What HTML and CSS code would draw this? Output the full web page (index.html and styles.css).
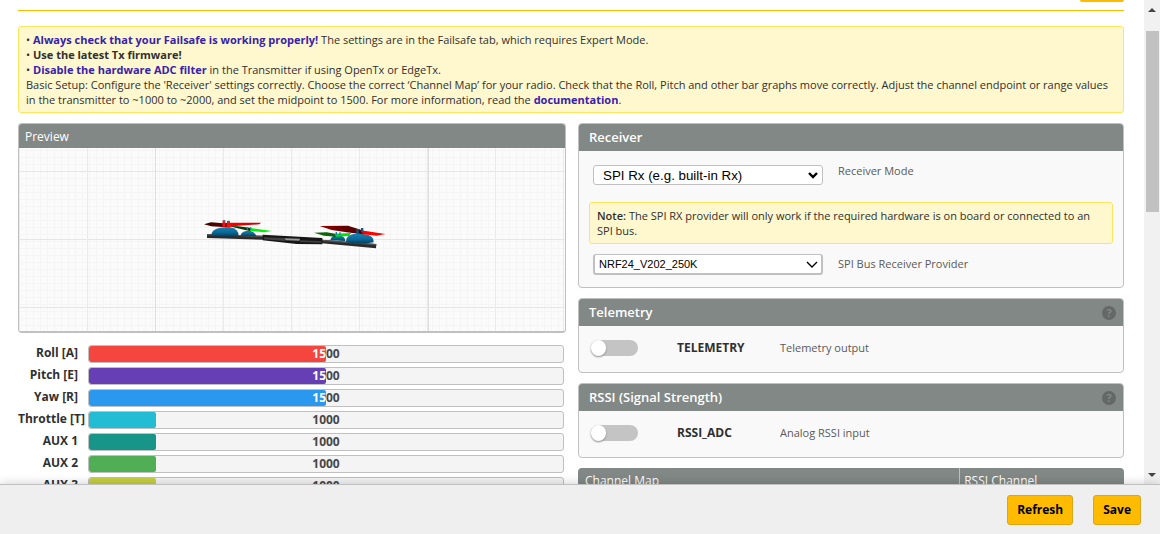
FILE: index.html
```html
<!DOCTYPE html>
<html lang="en">
<head>
<meta charset="utf-8">
<title>Receiver</title>
<link rel="stylesheet" href="styles.css">
</head>
<body>
<div class="app">
  <div class="viewport">
    <main class="content">
      <header class="tab-head"><a class="wiki" href="#" aria-label="Wiki"></a></header>
      <section class="note intro">
        <p>• <a href="#">Always check that your Failsafe is working properly!</a> The settings are in the Failsafe tab, which requires Expert Mode.</p>
        <p>• <strong>Use the latest Tx firmware!</strong></p>
        <p>• <a href="#">Disable the hardware ADC filter</a> in the Transmitter if using OpenTx or EdgeTx.</p>
        <p>Basic Setup: Configure the 'Receiver' settings correctly. Choose the correct ‘Channel Map’ for your radio. Check that the Roll, Pitch and other bar graphs move correctly. Adjust the channel endpoint or range values in the transmitter to ~1000 to ~2000, and set the midpoint to 1500. For more information, read the <a href="#">documentation</a>.</p>
      </section>
      <div class="columns">
        <div class="left">
          <section class="box preview">
            <h2 class="preview-title">Preview</h2>
            <div class="stage">
              <svg class="quad" viewBox="-9 21 630 165" width="210" height="55" role="img" aria-label="Quadcopter model">
                <defs>
                  <linearGradient id="motor" x1="0" y1="0" x2="0" y2="1"><stop offset="0" stop-color="#1482b4"/><stop offset=".6" stop-color="#0a6694"/><stop offset="1" stop-color="#063a56"/></linearGradient>
                  <linearGradient id="redL"><stop offset="0" stop-color="#300"/><stop offset=".36" stop-color="#600"/><stop offset=".44" stop-color="#f00"/><stop offset="1" stop-color="#c00"/></linearGradient>
                  <linearGradient id="redR"><stop offset="0" stop-color="#900"/><stop offset=".35" stop-color="#600"/><stop offset=".62" stop-color="#500"/><stop offset=".67" stop-color="#f00"/><stop offset="1" stop-color="#f00"/></linearGradient>
                </defs>
                <path d="M51 87L220 92L219 104L51 99Z" fill="#2b2b2b"/>
                <path d="M51 87L220 92L220 96L51 91Z" fill="#555"/>
                <path d="M395 104L559 117L558 130L395 115Z" fill="#2b2b2b"/>
                <path d="M395 104L559 117L559 121L395 108Z" fill="#555"/>
                <path d="M218 89L397 99L397 118L320 117L218 106Z" fill="#161616"/>
                <path d="M222 97L290 100L284 108L222 103ZM330 106L395 109L395 113L330 111Z" fill="#414141"/>
                <path d="M285 100L330 101L328 107L287 106Z" fill="#999"/>
                <path d="M152 92Q153 78 174 77Q196 79 198 93Z" fill="url(#motor)"/>
                <path d="M114 63L145 64L184 69L182 79Z" fill="#063806"/>
                <path d="M180 69L246 78L222 82L180 77Z" fill="#06ef06"/>
                <path d="M65 91Q62 74 90 68L118 66Q148 72 145 92Q105 98 65 91Z" fill="url(#motor)"/>
                <path d="M42 58L63 52L100 55L120 53L213 53L208 58L145 62L108 67L64 64Z" fill="url(#redL)"/>
                <path d="M98 46L106 46L106 65L97 65ZM111 48L120 48L120 65L111 65Z" fill="#e91515"/>
                <path d="M99 46h6v5h-6ZM113 47h6v5h-6ZM170 67h4v8h-4ZM180 67h4v8h-4Z" fill="#1482b4"/>
                <path d="M421 106Q423 91 443 89Q465 91 466 108Z" fill="url(#motor)"/>
                <path d="M372 83L410 82L440 87L438 95L402 92Z" fill="#0a640a"/>
                <path d="M434 86L484 84L476 93L438 95Z" fill="#06df06"/>
                <path d="M437 81h4v9h-4ZM448 82h4v8h-4Z" fill="#1482b4"/>
                <path d="M468 112Q466 92 490 87L522 87Q553 91 551 112Q512 119 468 112Z" fill="url(#motor)"/>
                <path d="M389 63L474 62L522 77L586 87L560 92L505 86L470 82L425 75Z" fill="url(#redR)"/>
                <path d="M499 73h7v14h-7ZM513 69h7v12h-7Z" fill="#0b5c84"/>
              </svg>
            </div>
          </section>
          <ul class="bars">
            <li><span class="name">Roll [A]</span><div class="meter"><span class="value">1500</span><div class="fill red" style="width:50%"><span class="value" style="width:200%">1500</span></div></div></li>
            <li><span class="name">Pitch [E]</span><div class="meter"><span class="value">1500</span><div class="fill purple" style="width:50%"><span class="value" style="width:200%">1500</span></div></div></li>
            <li><span class="name">Yaw [R]</span><div class="meter"><span class="value">1500</span><div class="fill blue" style="width:50%"><span class="value" style="width:200%">1500</span></div></div></li>
            <li><span class="name">Throttle [T]</span><div class="meter"><span class="value">1000</span><div class="fill cyan" style="width:14.2%"></div></div></li>
            <li><span class="name">AUX 1</span><div class="meter"><span class="value">1000</span><div class="fill teal" style="width:14.2%"></div></div></li>
            <li><span class="name">AUX 2</span><div class="meter"><span class="value">1000</span><div class="fill green" style="width:14.2%"></div></div></li>
            <li><span class="name">AUX 3</span><div class="meter"><span class="value">1000</span><div class="fill lime" style="width:14.2%"></div></div></li>
          </ul>
        </div>
        <div class="right">
          <section class="box">
            <h2 class="box-title">Receiver</h2>
            <div class="receiver">
              <div class="field">
                <div class="pick bold-arrow"><select id="mode" class="select large"><option>SPI Rx (e.g. built-in Rx)</option></select><svg viewBox="0 0 10 7" width="10" height="7"><path d="M1 1L5 5L9 1" /></svg></div>
                <label for="mode">Receiver Mode</label>
              </div>
              <p class="note"><strong>Note:</strong> The SPI RX provider will only work if the required hardware is on board or connected to an SPI bus.</p>
              <div class="field low">
                <div class="pick thin-arrow"><select id="provider" class="select small"><option>NRF24_V202_250K</option></select><svg viewBox="0 0 12 8" width="12" height="8"><path d="M1 1L6 6L11 1" /></svg></div>
                <label for="provider">SPI Bus Receiver Provider</label>
              </div>
            </div>
          </section>
          <section class="box">
            <h2 class="box-title">Telemetry <button class="help" aria-label="Telemetry help">?</button></h2>
            <div class="feature">
              <input type="checkbox" class="switch" id="telemetry"><label class="feature-name" for="telemetry">TELEMETRY</label><span>Telemetry output</span>
            </div>
          </section>
          <section class="box">
            <h2 class="box-title">RSSI (Signal Strength) <button class="help" aria-label="RSSI help">?</button></h2>
            <div class="feature">
              <input type="checkbox" class="switch" id="rssi"><label class="feature-name" for="rssi">RSSI_ADC</label><span>Analog RSSI input</span>
            </div>
          </section>
          <table class="map">
            <thead><tr><th class="map-main">Channel Map</th><th>RSSI Channel</th></tr></thead>
          </table>
        </div>
      </div>
    </main>
    <div class="scrollbar" aria-hidden="true">
      <svg viewBox="0 0 8 4" width="8" height="4"><path d="M0 4L4 0L8 4Z"/></svg>
      <div class="track"><div class="thumb"></div></div>
      <svg viewBox="0 0 8 4" width="8" height="4"><path d="M0 0L4 4L8 0Z"/></svg>
    </div>
  </div>
  <footer class="toolbar">
    <button class="btn">Refresh</button>
    <button class="btn">Save</button>
  </footer>
</div>
</body>
</html>
```

FILE: styles.css
```css
* { box-sizing: border-box; }
body { margin: 0; background: #fff; color: #303030; font: 11px/15px "Open Sans", sans-serif; }
p, h2, ul { margin: 0; padding: 0; }
strong { font-weight: 600; }
.app { display: flex; flex-direction: column; height: 100vh; overflow: hidden; }
.viewport { display: flex; flex: 1; min-height: 0; }
.content { flex: 1; min-width: 0; padding: 0 20px 0 18px; overflow: hidden; }

.tab-head { display: flex; justify-content: flex-end; height: 11px; border-bottom: 1px solid #ffbb00; }
.wiki { width: 44px; height: 2px; background: #ffbb00; border-radius: 0 0 3px 3px; }

.note { padding: 5px 7px; background: #fff7cd; border: 1px solid #ffe55f; border-radius: 3px; }
.note a { color: #3622ae; font-weight: 700; text-decoration: none; }
.intro { margin: 15px 0 10px; }
.intro strong { font-weight: 700; }

.columns { display: grid; grid-template-columns: calc(50% - 5px) 1fr; gap: 12px; }
.right { display: flex; flex-direction: column; gap: 10px; }
.box { background: #f9f9f9; border: 1px solid #c0c0c0; border-radius: 4px; overflow: hidden; }
.box-title, .preview-title { color: #fff; background: #828885; font-weight: 600; }
.box-title { display: flex; justify-content: space-between; align-items: center; height: 27px; padding: 0 7px 0 10px; font-size: 13px; }
.preview-title { padding: 5px 6px 3px; font-size: 12px; font-weight: 400; line-height: 16px; }

.preview { border-bottom-width: 2px; }
.stage {
  display: flex; align-items: center; justify-content: center; height: 183px;
  background-color: #fbfbfb;
  background-image:
    linear-gradient(90deg, #dedede 1px, transparent 1px),
    linear-gradient(90deg, #eaeaea 1px, transparent 1px),
    linear-gradient(#e6e6e6 1px, transparent 1px),
    linear-gradient(90deg, #f5f5f5 1px, transparent 1px),
    linear-gradient(#f5f5f5 1px, transparent 1px);
  background-size: 273px 100%, 68px 100%, 100% 68px, 7px 100%, 100% 7px;
  background-position: 136px 0, 0 0, 0 23px, 0 0, 0 2px;
}

.bars { display: flex; flex-direction: column; gap: 4px; margin-top: 12px; list-style: none; }
.bars li { display: flex; gap: 10px; padding-right: 2px; font-size: 12px; font-weight: 700; }
.name { width: 60px; text-align: right; white-space: nowrap; }
.meter { display: grid; flex: 1; height: 18px; background: #f4f4f4; border: 1px solid #c0c0c0; border-radius: 3px; line-height: 16px; overflow: hidden; }
.meter > * { grid-area: 1 / 1; }
.value { display: block; text-align: center; color: #474747; }
.fill { height: 16px; border-radius: 2px; overflow: hidden; }
.fill .value { color: #fff; }
.red { background: #f4453f; }
.purple { background: #673fb4; }
.blue { background: #2b98f0; }
.cyan { background: #22bcd4; }
.teal { background: #169588; }
.green { background: #50ae55; }
.lime { background: #c5d040; }

.receiver { display: flex; flex-direction: column; padding: 14px 10px 12px; }
.receiver .note { margin: 17px 0 10px; }
.field { display: flex; gap: 15px; padding-left: 4px; color: #5a5a5a; }
.field label { line-height: 12px; }
.field.low label { line-height: 15px; padding-bottom: 2px; }
.field.low { align-items: center; }
.pick { display: grid; align-items: center; width: 230px; }
.pick > * { grid-area: 1 / 1; }
.pick svg { justify-self: end; margin-right: 5px; fill: none; stroke: #000; pointer-events: none; }
.bold-arrow svg { stroke-width: 2.4; }
.thin-arrow svg { stroke-width: 1.4; }
.select { width: 100%; appearance: none; color: #000; background: #fff; border: 1px solid #c0c0c0; border-radius: 3px; font-family: "Liberation Sans", Arial, sans-serif; }
.large { height: 20px; padding: 0 9px; }
.small { height: 21px; padding: 0 4px; border-width: 1px 2px 2px; font-size: 11px; }

.feature { display: flex; align-items: flex-start; height: 46px; padding: 14px 12px 0; color: #5a5a5a; line-height: 16px; }
.feature-name { width: 103px; margin-left: 39px; color: #303030; font-size: 12px; font-weight: 700; }
.switch { display: flex; appearance: none; width: 47px; height: 16px; margin: 0; background: #c4c4c4; border-radius: 8px; }
.switch::before { content: ""; width: 15px; height: 16px; background: #fff; border-radius: 8px; box-shadow: 0 1px 2px #888; }
.switch:checked { justify-content: flex-end; background: #ffbb00; }
.help { width: 14px; height: 14px; padding: 0; border: 0; border-radius: 7px; color: #828885; background: #646866; font: 700 11px/14px "Open Sans", sans-serif; }

.map { width: 100%; border-collapse: separate; border-spacing: 0; color: #fff; background: #828885; border-radius: 4px 4px 0 0; }
.map th { padding: 5px 4px 4px; text-align: left; font-size: 12px; font-weight: 400; }
.map .map-main { width: 70%; padding-left: 7px; border-right: 1px solid #c0c0c0; }

.scrollbar { display: flex; flex-direction: column; align-items: center; width: 16px; padding: 8px 0 7px; background: #f1f1f1; fill: #444; }
.track { flex: 1; width: 13px; padding-top: 19px; }
.thumb { height: 41%; background: #c1c1c1; }

.toolbar { display: flex; justify-content: flex-end; gap: 20px; height: 50px; padding: 10px 19px; z-index: 1; background: #efefef; border-top: 1px solid #c0c0c0; box-shadow: 0 0 10px #0003; }
.btn { height: 30px; padding: 0 9px; color: #000; background: #ffbb00; border: 1px solid #dba718; border-radius: 3px; font: 700 12px/16px "Open Sans", sans-serif; }
```
